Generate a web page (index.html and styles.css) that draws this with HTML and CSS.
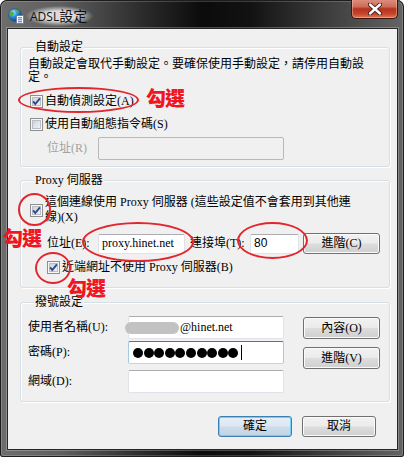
FILE: index.html
```html
<!DOCTYPE html>
<html lang="zh-Hant">
<head>
<meta charset="utf-8">
<title>ADSL設定</title>
<link rel="stylesheet" href="styles.css">
</head>
<body>
<div class="window">
  <div class="titlebar">
    <div class="title">
      <svg class="app-icon" width="16" height="16" viewBox="0 0 16 16">
        <defs>
          <radialGradient id="globe" cx="35%" cy="30%" r="75%">
            <stop offset="0" stop-color="#b8ecff"/>
            <stop offset=".45" stop-color="#2f8fdc"/>
            <stop offset="1" stop-color="#0c3f8a"/>
          </radialGradient>
        </defs>
        <circle cx="7" cy="7" r="6.3" fill="url(#globe)" stroke="#1c4f8f" stroke-width=".6"/>
        <path d="M2.2 4.2c1.4-1 2.8-.8 3.6.4.6 1 .1 2-.9 2.3-.9.3-.8 1.6-1.8 1.6-.9 0-1.2-1.3-1.2-2.4 0-.7.1-1.3.3-1.9z" fill="#49b33f"/>
        <path d="M7.6 1.2c1.9.4 3.5 1.8 4.2 3.6-1 .2-1.9-.3-2.4-1.1-.6.5-1.6.3-1.9-.4-.2-.7-.1-1.4.1-2.1z" fill="#49b33f"/>
        <rect x="8.5" y="7.5" width="7" height="8" fill="#fdfdfd" stroke="#6d7f99"/>
        <path d="M10 9.8h4M10 11.8h4M10 13.8h4" stroke="#2f6bc4" stroke-width="1"/>
      </svg>
      <span class="title-text"><span class="t-lat">ADSL</span>設定</span>
    </div>
    <div class="close-btn">
      <svg width="14" height="12" viewBox="0 0 14 12">
        <path d="M2 1.5L12 10.5M12 1.5L2 10.5" stroke="#3a1712" stroke-width="4.2" stroke-linecap="round"/>
        <path d="M2 1.5L12 10.5M12 1.5L2 10.5" stroke="#ffffff" stroke-width="2.4" stroke-linecap="round"/>
      </svg>
    </div>
  </div>

  <div class="client">
    <section class="group group-auto">
      <div class="group-title">自動設定</div>
      <p class="desc">自動設定會取代手動設定。要確保使用手動設定，請停用自動設定。</p>
      <div class="check check-a">
        <span class="cb"><svg viewBox="0 0 11 11" width="11" height="11"><path d="M2.1 5.4L4.3 8.1L8.9 2.3" fill="none" stroke="#34468c" stroke-width="1.9"/></svg></span>
        <span>自動偵測設定(A)</span>
      </div>
      <div class="check check-s">
        <span class="cb"></span>
        <span>使用自動組態指令碼(S)</span>
      </div>
      <div class="field-row row-script">
        <span class="lbl lbl-addr disabled">位址(R)</span>
        <span class="textbox tb-disabled tb-script"></span>
      </div>
    </section>

    <section class="group group-proxy">
      <div class="group-title">Proxy 伺服器</div>
      <div class="check check-x">
        <span class="cb"><svg viewBox="0 0 11 11" width="11" height="11"><path d="M2.1 5.4L4.3 8.1L8.9 2.3" fill="none" stroke="#34468c" stroke-width="1.9"/></svg></span>
        <span class="two-line">這個連線使用 Proxy 伺服器 (這些設定值不會套用到其他連<br>線)(X)</span>
      </div>
      <div class="field-row row-proxy">
        <span class="lbl lbl-addr">位址(E):</span>
        <span class="textbox tb-proxy">proxy.hinet.net</span>
        <span class="lbl lbl-port">連接埠(T):</span>
        <span class="textbox tb-port">80</span>
        <span class="btn btn-side">進階(C)</span>
      </div>
      <div class="check check-b">
        <span class="cb"><svg viewBox="0 0 11 11" width="11" height="11"><path d="M2.1 5.4L4.3 8.1L8.9 2.3" fill="none" stroke="#34468c" stroke-width="1.9"/></svg></span>
        <span>近端網址不使用 Proxy 伺服器(B)</span>
      </div>
    </section>

    <section class="group group-dial">
      <div class="group-title">撥號設定</div>
      <div class="dial-body">
        <div class="dial-fields">
          <div class="dial-row row-user">
            <span class="lbl lbl-dial">使用者名稱(U):</span>
            <span class="textbox tb-dial"><span class="blur"></span>@hinet.net</span>
          </div>
          <div class="dial-row row-pass">
            <span class="lbl lbl-dial">密碼(P):</span>
            <span class="textbox tb-dial tb-focus">
              <span class="dots"><i></i><i></i><i></i><i></i><i></i><i></i><i></i><i></i><i></i><i></i></span><span class="caret"></span>
            </span>
          </div>
          <div class="dial-row row-domain">
            <span class="lbl lbl-dial">網域(D):</span>
            <span class="textbox tb-dial"></span>
          </div>
        </div>
        <div class="dial-buttons">
          <span class="btn btn-side btn-props">內容(O)</span>
          <span class="btn btn-side btn-adv">進階(V)</span>
        </div>
      </div>
    </section>

    <div class="footer">
      <span class="btn btn-foot btn-default">確定</span>
      <span class="btn btn-foot">取消</span>
    </div>
  </div>

  <div class="marks">
    <span class="ring ring-a"></span>
    <span class="ring ring-x"></span>
    <span class="ring ring-proxy"></span>
    <span class="ring ring-port"></span>
    <span class="ring ring-b"></span>
    <span class="note note-a">勾選</span>
    <span class="note note-x">勾選</span>
    <span class="note note-b">勾選</span>
  </div>
</div>
</body>
</html>
```

FILE: styles.css
```css
html, body {
  margin: 0;
  padding: 0;
  background: #ffffff;
}

.window {
  position: relative;
  width: 404px;
  height: 457px;
  box-sizing: border-box;
  padding: 0 6px 7px 7px;
  border-radius: 7px 7px 3px 3px;
  background: linear-gradient(to right, #6d6d6d 0%, #5f5f5f 15%, #2c2c2c 35%, #0b0b0b 50%, #121212 62%, #3b3b3b 80%, #646464 100%);
  box-shadow: inset 0 0 0 1px #1d1d1d, inset 0 0 0 2px rgba(255, 255, 255, 0.18);
  font-family: "Liberation Serif", "Noto Sans CJK TC", serif;
  font-size: 12px;
  line-height: 13px;
  color: #000;
  overflow: hidden;
}

/* ---------- title bar ---------- */
.titlebar {
  height: 28px;
  display: flex;
  justify-content: space-between;
  align-items: flex-start;
}

.title {
  display: flex;
  align-items: center;
  margin-top: 6px;
  padding-left: 1px;
}

.app-icon {
  display: block;
  flex: none;
}

.title-text {
  margin-left: 2px;
  padding: 2px 6px 2px 4px;
  font-family: "Noto Sans CJK TC", sans-serif;
  font-size: 14px;
  line-height: 14px;
  color: #111;
  background: radial-gradient(ellipse at center, rgba(255, 255, 255, 0.78) 35%, rgba(255, 255, 255, 0) 72%);
}

.t-lat {
  font-family: "Open Sans", "Liberation Sans", sans-serif;
  font-size: 12px;
}

.close-btn {
  width: 47px;
  height: 20px;
  box-sizing: border-box;
  margin-top: -1px;
  border: 1px solid #3b1510;
  border-top: none;
  border-radius: 0 0 5px 5px;
  background: linear-gradient(#dd9283 0%, #cf6b58 40%, #b5331f 52%, #c5432c 78%, #e07a57 100%);
  box-shadow: inset 0 0 0 1px rgba(255, 200, 180, 0.45);
  display: flex;
  align-items: center;
  justify-content: center;
}

.close-btn svg {
  display: block;
}

/* ---------- client ---------- */
.client {
  height: 422px;
  box-sizing: border-box;
  border: 1px solid #262626;
  background: #f0f0f0;
  padding: 18px 0 11px 0;
  box-shadow: 0 0 0 1px rgba(255, 255, 255, 0.25);
}

.group {
  margin: 0 7px 0 12px;
  border: 1px solid #d5dfe5;
  border-radius: 3px;
  box-shadow: inset 1px 1px 0 #ffffff, 1px 1px 0 #ffffff;
  padding: 0 8px 6px 7px;
}

.group-proxy {
  margin-top: 13px;
  padding-bottom: 13px;
}

.group-dial {
  margin-top: 14px;
  padding-bottom: 8px;
}

.group-title {
  width: fit-content;
  margin: -7px 0 0 6px;
  padding: 0 1px;
  background: #f0f0f0;
}

.desc {
  margin: 4px 0 0 0;
  width: 340px;
}

.check {
  display: flex;
  align-items: center;
  gap: 2px;
  margin-left: 2px;
}

.check-a { margin-top: 11px; }
.check-s { margin-top: 10px; }
.check-x { margin-top: 8px; }
.check-x .two-line { line-height: 15px; }
.check-b { margin-top: 7px; margin-left: 19px; }

.cb {
  flex: none;
  width: 13px;
  height: 13px;
  box-sizing: border-box;
  border: 1px solid #8e8f8f;
  background: linear-gradient(135deg, #c3c8cf 0%, #e3e6ea 55%, #f6f6f6 100%);
  box-shadow: inset 0 0 0 1px #f7f7f7, inset 0 0 0 2px #b9bec5;
}

.cb svg {
  display: block;
}

.field-row {
  display: flex;
  align-items: center;
  padding-left: 19px;
}

.row-script {
  margin-top: 6px;
}

.row-proxy {
  margin-top: 8px;
  height: 21px;
}

.lbl-addr {
  width: 51px;
  flex: none;
}

.disabled {
  color: #a3a3a3;
}

.lbl-port {
  margin-left: 5px;
  width: 60px;
  flex: none;
}

.textbox {
  box-sizing: border-box;
  display: flex;
  align-items: center;
  background: #ffffff;
  border: 1px solid #e2e3ea;
  border-top-color: #abadb3;
  border-radius: 2px;
  padding-left: 3px;
  white-space: nowrap;
}

.tb-script {
  width: 186px;
  height: 23px;
}

.tb-disabled {
  background: #f0f0f0;
  border-color: #b8b8b8;
}

.tb-proxy {
  width: 87px;
  height: 20px;
}

.tb-port {
  width: 49px;
  height: 20px;
  font-family: "Liberation Sans", "Noto Sans CJK TC", sans-serif;
}

.btn {
  flex: none;
  box-sizing: border-box;
  display: flex;
  align-items: center;
  justify-content: center;
  border: 1px solid #707070;
  border-radius: 3px;
  background: linear-gradient(#f2f2f2 0%, #ebebeb 48%, #dddddd 52%, #cfcfcf 100%);
  box-shadow: inset 0 0 0 1px #fbfbfb;
  color: #000;
}

.btn-side {
  width: 77px;
  height: 21px;
}

.row-proxy .btn-side {
  margin-left: 4px;
}

/* ---------- dial-up ---------- */
.dial-body {
  display: flex;
  align-items: flex-start;
  margin-top: 7px;
}

.dial-fields {
  display: flex;
  flex-direction: column;
  gap: 2px;
}

.dial-row {
  display: flex;
  align-items: center;
}

.row-domain {
  margin-top: 4px;
}

.lbl-dial {
  width: 100px;
  flex: none;
}

.tb-dial {
  width: 156px;
  height: 23px;
  padding-left: 0;
  overflow: visible;
}

.blur {
  flex: none;
  width: 54px;
  height: 12px;
  margin-left: -4px;
  margin-right: 1px;
  border-radius: 6px;
  background: #c2c2c2;
  filter: blur(0.6px);
}

.tb-focus {
  border-color: #a4c9e3;
  border-top-color: #3d7bad;
  border-bottom-color: #b7d9ed;
  padding-left: 4px;
}

.dots {
  display: flex;
  gap: 0.6px;
}

.dots i {
  width: 10px;
  height: 10px;
  border-radius: 50%;
  background: #000;
}

.caret {
  width: 1px;
  height: 15px;
  margin-left: 3px;
  background: #000;
}

.dial-buttons {
  display: flex;
  flex-direction: column;
  gap: 8px;
  margin-left: 19px;
  margin-top: 1px;
}

.btn-props,
.btn-adv {
  height: 22px;
}

/* ---------- footer ---------- */
.footer {
  display: flex;
  justify-content: flex-end;
  gap: 10px;
  margin: 14px 21px 0 0;
}

.btn-foot {
  width: 74px;
  height: 21px;
}

.btn-default {
  border-color: #3c7fb1;
  background: linear-gradient(#e6eff7 0%, #dbe7f2 48%, #cddcea 52%, #c2d4e5 100%);
  box-shadow: inset 0 0 0 1px #6fd1f6;
}

/* ---------- annotations ---------- */
.marks {
  position: absolute;
  inset: 0;
  pointer-events: none;
}

.ring {
  position: absolute;
  box-sizing: border-box;
  border: 2px solid #e3262d;
  border-radius: 50%;
}

.ring-a { left: 18px; top: 87px; width: 121px; height: 26px; }
.ring-x { left: 18px; top: 193px; width: 33px; height: 33px; }
.ring-proxy { left: 82px; top: 222px; width: 112px; height: 40px; }
.ring-port { left: 237px; top: 222px; width: 71px; height: 37px; }
.ring-b { left: 35px; top: 252px; width: 36px; height: 32px; }

.note {
  position: absolute;
  font-family: "Noto Sans CJK TC", sans-serif;
  font-weight: 900;
  font-size: 20px;
  line-height: 16px;
  color: #f0161f;
  letter-spacing: -1px;
}

.note-a { left: 146px; top: 90px; }
.note-x { left: 3px; top: 230px; }
.note-b { left: 67px; top: 280px; }
```
